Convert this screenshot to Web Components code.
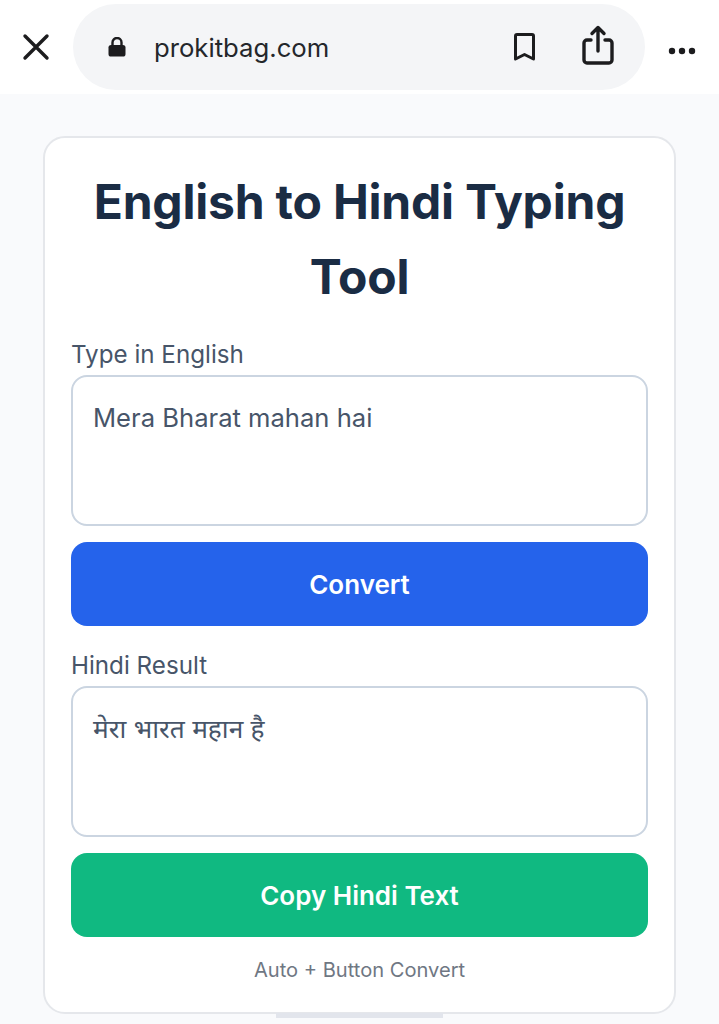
<!DOCTYPE html>
<html lang="en">
<head>
<meta charset="utf-8">
<title>English to Hindi Typing Tool</title>
<style>
  html, body { margin: 0; padding: 0; height: 100%; }
  body { width: 719px; height: 1024px; overflow: hidden; background: #f9fafc; font-family: Inter, "Noto Sans", "DejaVu Sans", sans-serif; }
</style>
</head>
<body>
<browser-bar url="prokitbag.com"></browser-bar>
<tool-card heading="English to Hindi Typing Tool">
  <text-field label="Type in English" value="Mera Bharat mahan hai" style="--size:25.6px"></text-field>
  <action-button color="#2563eb">Convert</action-button>
  <text-field label="Hindi Result" value="मेरा भारत महान है" lang="hi" style="margin-top:23px;--size:26.3px"></text-field>
  <action-button color="#10b981">Copy Hindi Text</action-button>
  <span slot="note">Auto + Button Convert</span>
</tool-card>

<script>
class BrowserBar extends HTMLElement {
  connectedCallback() {
    this.attachShadow({ mode: 'open' }).innerHTML = `
      <style>
        :host { display: block; height: 94px; background: #fff; box-sizing: border-box; padding: 4px 0 0 21px; }
        .row { display: flex; align-items: flex-start; }
        .close { width: 30px; height: 30px; margin: 28px 22px 0 0; flex: none; }
        .pill { width: 572px; height: 86px; border-radius: 43px; background: #f4f5f7; display: flex; align-items: center; box-sizing: border-box; padding-left: 35px; flex: none; }
        .lock { width: 18px; height: 20px; flex: none; margin-right: 28px; }
        .url { font-size: 25.7px; color: #24272b; flex: 1; }
        .mark { width: 24px; height: 29px; flex: none; margin-right: 45px; }
        .share { width: 32px; height: 40px; flex: none; margin-right: 31px; margin-top: -5px; }
        .more { width: 28px; height: 8px; margin: 43px 0 0 23px; flex: none; }
      </style>
      <div class="row">
        <svg class="close" viewBox="0 0 30 30"><path d="M4 4L26 26M26 4L4 26" stroke="#1c1c1e" stroke-width="3.4" stroke-linecap="round" fill="none"/></svg>
        <div class="pill">
          <svg class="lock" viewBox="0 0 18 20"><path d="M4.500 9V5.500a4.500 4.500 0 0 1 9 0V9" stroke="#1c1c1e" stroke-width="2.400" fill="none"/><rect x="0.500" y="8" width="17" height="11.500" rx="2.600" fill="#1c1c1e"/></svg>
          <span class="url">${this.getAttribute('url')}</span>
          <svg class="mark" viewBox="0 0 24 29"><path d="M2.500 3a1.500 1.500 0 0 1 1.500-1.500h15a1.500 1.500 0 0 1 1.500 1.500V26L11.500 21.500 2.500 26Z" stroke="#1c1c1e" stroke-width="3" stroke-linejoin="round" fill="none"/></svg>
          <svg class="share" viewBox="0 0 32 40"><path d="M9 15H5A3 3 0 0 0 2 18V35A3 3 0 0 0 5 38H27A3 3 0 0 0 30 35V18A3 3 0 0 0 27 15H23" stroke="#1c1c1e" stroke-width="3.400" fill="none" stroke-linecap="round"/><path d="M16 26V3M10 8.500L16 2.500 22 8.500" stroke="#1c1c1e" stroke-width="3.400" fill="none" stroke-linecap="round" stroke-linejoin="round"/></svg>
        </div>
        <svg class="more" viewBox="0 0 28 8"><circle cx="4" cy="4" r="3.200" fill="#1c1c1e"/><circle cx="14" cy="4" r="3.200" fill="#1c1c1e"/><circle cx="24" cy="4" r="3.200" fill="#1c1c1e"/></svg>
      </div>`;
  }
}

class ToolCard extends HTMLElement {
  connectedCallback() {
    this.attachShadow({ mode: 'open' }).innerHTML = `
      <style>
        :host { display: block; position: relative; box-sizing: border-box; width: 633px; height: 878px; margin: 42px 0 0 43px; background: #fff; border: 2px solid #e5e7eb; border-radius: 22px; padding: 26px 26px 0; }
        h1 { margin: 0 0 24px; font-size: 48px; line-height: 75px; font-weight: 700; color: #1a2c44; text-align: center; letter-spacing: -0.2px; }
        .stack { display: flex; flex-direction: column; }
        .note { margin-top: 19px; text-align: center; font-size: 20.1px; line-height: 28px; color: #6f7783; }
        .grip { position: absolute; left: 231px; bottom: -6px; width: 167px; height: 5px; background: #e2e5ec; }
      </style>
      <h1>${this.getAttribute('heading')}</h1>
      <div class="stack"><slot></slot></div>
      <div class="note"><slot name="note"></slot></div>
      <div class="grip"></div>`;
  }
}

class TextField extends HTMLElement {
  connectedCallback() {
    this.attachShadow({ mode: 'open' }).innerHTML = `
      <style>
        :host { display: block; }
        label { display: block; font-size: 24.200px; line-height: 34px; color: #475569; margin-bottom: 3px; }
        .box { box-sizing: border-box; height: 151px; border: 2px solid #cbd5e1; border-radius: 16px; padding: 22px 20px; font-size: var(--size, 26px); line-height: 38px; color: #475569; background: #fff; font-family: Inter, "Noto Sans Devanagari", "Noto Serif Devanagari", "Lohit Devanagari", "Noto Sans", sans-serif; }
      </style>
      <label>${this.getAttribute('label')}</label>
      <div class="box">${this.getAttribute('value')}</div>`;
  }
}

class ActionButton extends HTMLElement {
  connectedCallback() {
    this.attachShadow({ mode: 'open' }).innerHTML = `
      <style>
        :host { display: flex; align-items: center; justify-content: center; height: 84px; margin-top: 16px; border-radius: 16px; background: ${this.getAttribute('color')}; color: #fff; font-size: 26px; font-weight: 600; }
      </style>
      <slot></slot>`;
  }
}

customElements.define('browser-bar', BrowserBar);
customElements.define('tool-card', ToolCard);
customElements.define('text-field', TextField);
customElements.define('action-button', ActionButton);
</script>
</body>
</html>
